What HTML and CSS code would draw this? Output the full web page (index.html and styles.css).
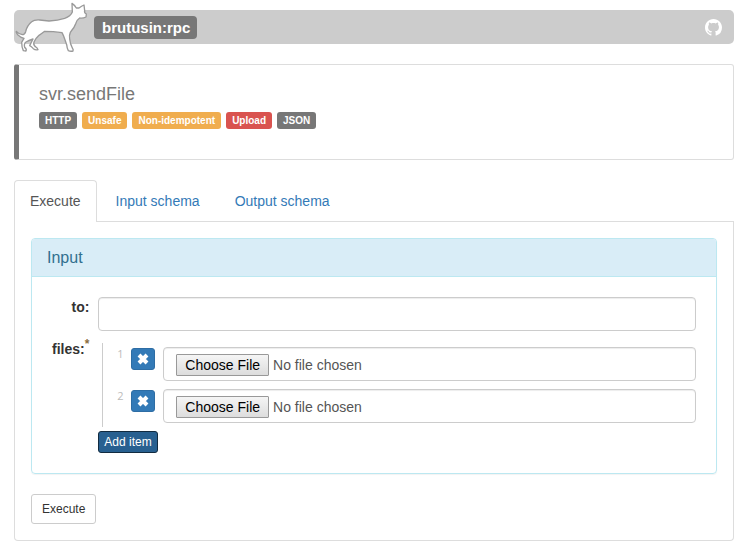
FILE: index.html
```
<!DOCTYPE html>
<html lang="en">
<head>
<meta charset="utf-8">
<title>brutusin:rpc</title>
<link rel="stylesheet" href="styles.css">
</head>
<body>
<header class="topbar">
  <svg class="dog" viewBox="0 0 255 165" aria-hidden="true">
    <path d="M186 10 Q194 15 199 24 L207 24 Q215 18 222 15 L224 32 Q222 38 229 42 L228 51 Q218 56 209 54 Q201 59 197 71 Q193 82 186 90 L181 97 Q177 105 179 117 Q180 130 187 144 Q191 149 189 153 Q182 155 175 152 Q171 145 170 134 Q164 117 160 106 L156 98 L130 95 L104 94 Q95 101 87 106 Q77 115 72 126 Q69 134 76 140 Q82 143 84 149 Q76 151 70 146 Q64 139 59 137 L69 117 Q56 121 48 126 Q41 131 44 142 Q51 147 48 153 L40 152 Q35 142 35 127 Q39 120 42 115 Q31 112 24 105 Q17 97 19 94 Q26 102 37 104 Q44 104 47 95 Q51 76 65 65 Q72 59 89 60 L117 63 Q144 61 164 55 Q182 49 187 36 Z"/>
  </svg>
  <h1 class="brand">brutusin:rpc</h1>
  <a class="github" href="#" aria-label="GitHub">
    <svg viewBox="0 0 16 16" aria-hidden="true"><path d="M8 0C3.58 0 0 3.58 0 8c0 3.54 2.29 6.53 5.47 7.59.4.07.55-.17.55-.38 0-.19-.01-.82-.01-1.49-2.01.37-2.53-.49-2.69-.94-.09-.23-.48-.94-.82-1.13-.28-.15-.68-.52-.01-.53.63-.01 1.08.58 1.23.82.72 1.21 1.87.87 2.33.66.07-.52.28-.87.51-1.07-1.78-.2-3.64-.89-3.64-3.95 0-.87.31-1.59.82-2.15-.08-.2-.36-1.02.08-2.12 0 0 .67-.21 2.2.82.64-.18 1.32-.27 2-.27s1.36.09 2 .27c1.53-1.04 2.2-.82 2.2-.82.44 1.1.16 1.92.08 2.12.51.56.82 1.27.82 2.15 0 3.07-1.87 3.75-3.65 3.95.29.25.54.73.54 1.48 0 1.07-.01 1.93-.01 2.2 0 .21.15.46.55.38A8.01 8.01 0 0 0 16 8c0-4.42-3.58-8-8-8z"/></svg>
  </a>
</header>

<section class="callout">
  <h2 class="service">svr.sendFile</h2>
  <div class="tags">
    <span class="tag">HTTP</span>
    <span class="tag warning">Unsafe</span>
    <span class="tag warning">Non-idempotent</span>
    <span class="tag danger">Upload</span>
    <span class="tag">JSON</span>
  </div>
</section>

<nav class="tabs">
  <a class="tab active" href="#execute">Execute</a>
  <a class="tab" href="#input">Input schema</a>
  <a class="tab" href="#output">Output schema</a>
</nav>

<form class="content" id="execute">
  <section class="panel">
    <h3 class="panel-title">Input</h3>
    <div class="fields">
      <label class="name" for="to">to:</label>
      <input class="control" id="to" type="text">
      <label class="name" for="file1">files:<sup>*</sup></label>
      <div>
        <ol class="items">
          <li class="item">
            <span class="index">1</span>
            <button class="remove" type="button" aria-label="Remove item 1"><svg viewBox="0 0 12 12" aria-hidden="true"><path d="M2 2 10 10M10 2 2 10"/></svg></button>
            <input class="control file" id="file1" type="file" aria-label="File 1">
          </li>
          <li class="item">
            <span class="index">2</span>
            <button class="remove" type="button" aria-label="Remove item 2"><svg viewBox="0 0 12 12" aria-hidden="true"><path d="M2 2 10 10M10 2 2 10"/></svg></button>
            <input class="control file" id="file2" type="file" aria-label="File 2">
          </li>
        </ol>
        <button class="add" type="button">Add item</button>
      </div>
    </div>
  </section>
  <button class="execute" type="submit">Execute</button>
</form>
</body>
</html>
```
FILE: styles.css
```
* {
  box-sizing: border-box;
}

body {
  margin: 0;
  padding: 10px 12px 12px 14px;
  font: 14px/20px "Liberation Sans", Arial, sans-serif;
  color: #333;
  background: #fff;
}

h1, h2, h3 {
  margin: 0;
}

button, input {
  font-family: inherit;
}

/* Header bar */
.topbar {
  display: flex;
  align-items: center;
  height: 34px;
  padding: 0 12px;
  background: #ccc;
  border-radius: 5px;
}

/* The dog is taller than the bar and overlaps its edges */
.dog {
  flex: none;
  width: 85px;
  height: 55px;
  margin: -10px -1px -11px -16px;
  overflow: visible;
  fill: #fff;
  stroke: #999;
  stroke-width: 4;
  stroke-linejoin: round;
}

.brand {
  margin-right: auto;
  padding: 0 7px 0 8px;
  font-size: 15px;
  line-height: 23px;
  color: #fff;
  background: #777;
  border-radius: 4px;
}

.github svg {
  display: block;
  width: 17px;
  height: 17px;
  fill: #fff;
}

/* Service summary */
.callout {
  margin-top: 20px;
  padding: 19px 20px 30px;
  border: 1px solid #ddd;
  border-left: 5px solid #777;
  border-radius: 3px;
}

.service {
  font-size: 18px;
  font-weight: 400;
  line-height: 20px;
  color: #777;
}

.tags {
  display: flex;
  gap: 5px;
  margin-top: 8px;
}

.tag {
  padding: 0 6px;
  font-size: 10px;
  font-weight: 700;
  line-height: 17px;
  color: #fff;
  background: #777;
  border-radius: 3px;
}

.warning {
  background: #f0ad4e;
}

.danger {
  background: #d9534f;
}

/* Tabs */
.tabs {
  display: flex;
  gap: 3px;
  margin-top: 20px;
  border-bottom: 1px solid #ddd;
}

.tab {
  padding: 10px 15px;
  border: 1px solid transparent;
  border-bottom: 0;
  border-radius: 4px 4px 0 0;
  color: #337ab7;
  text-decoration: none;
}

.active {
  margin-bottom: -1px;
  border-color: #ddd;
  color: #555;
  background: #fff;
}

.content {
  padding: 16px;
  border: 1px solid #ddd;
  border-top: 0;
  border-radius: 0 0 4px 4px;
}

.panel {
  border: 1px solid #bce8f1;
  border-radius: 4px;
  box-shadow: 0 1px 1px rgba(0, 0, 0, 0.05);
}

.panel-title {
  padding: 9px 15px 8px;
  border-bottom: 1px solid #bce8f1;
  border-radius: 3px 3px 0 0;
  font-size: 16px;
  font-weight: 400;
  line-height: 20px;
  color: #31708f;
  background: #d9edf7;
}

/* Form */
.fields {
  display: grid;
  grid-template-columns: max-content 1fr;
  gap: 8px 9px;
  padding: 20px;
}

.name {
  font-weight: 700;
  line-height: 20px;
  text-align: right;
}

.name sup {
  font-size: 12px;
  line-height: 0;
  color: #8a6d3b;
}

.control {
  display: block;
  width: 100%;
  min-width: 0;
  height: 34px;
  padding: 6px 12px;
  border: 1px solid #ccc;
  border-radius: 4px;
  font-size: 14px;
  line-height: 20px;
  color: #555;
  background: #fff;
  box-shadow: inset 0 1px 1px rgba(0, 0, 0, 0.075);
}

.file::file-selector-button {
  height: 22px;
  margin: 0 4px 0 0;
  padding: 0 8px;
  border: 1px solid #999;
  border-radius: 1px;
  font: inherit;
  color: #000;
  background: linear-gradient(#f5f5f5, #ddd);
}

.items {
  margin: 4px 0 4px 4px;
  padding: 0 0 0 14px;
  border-left: 1px solid #ccc;
  list-style: none;
}

.item {
  display: flex;
  align-items: flex-start;
  gap: 8px;
  padding: 4px 0;
}

.index {
  width: 6px;
  font: 11px/14px "Open Sans", sans-serif;
  color: #bbb;
}

.remove {
  flex: none;
  width: 24px;
  height: 22px;
  margin-top: 1px;
  padding: 0;
  border: 1px solid #2e6da4;
  border-radius: 3px;
  background: #337ab7;
}

.remove svg {
  display: block;
  width: 12px;
  height: 12px;
  margin: auto;
  fill: none;
  stroke: #fff;
  stroke-width: 4;
}

.add {
  display: block;
  height: 22px;
  padding: 0 5px;
  border: 1px solid #122b40;
  border-radius: 3px;
  font-size: 12px;
  line-height: 18px;
  color: #fff;
  background: #286090;
}

.execute {
  display: block;
  height: 30px;
  margin-top: 20px;
  padding: 0 10px;
  border: 1px solid #ccc;
  border-radius: 3px;
  font-size: 12px;
  line-height: 18px;
  color: #333;
  background: #fff;
}
```
